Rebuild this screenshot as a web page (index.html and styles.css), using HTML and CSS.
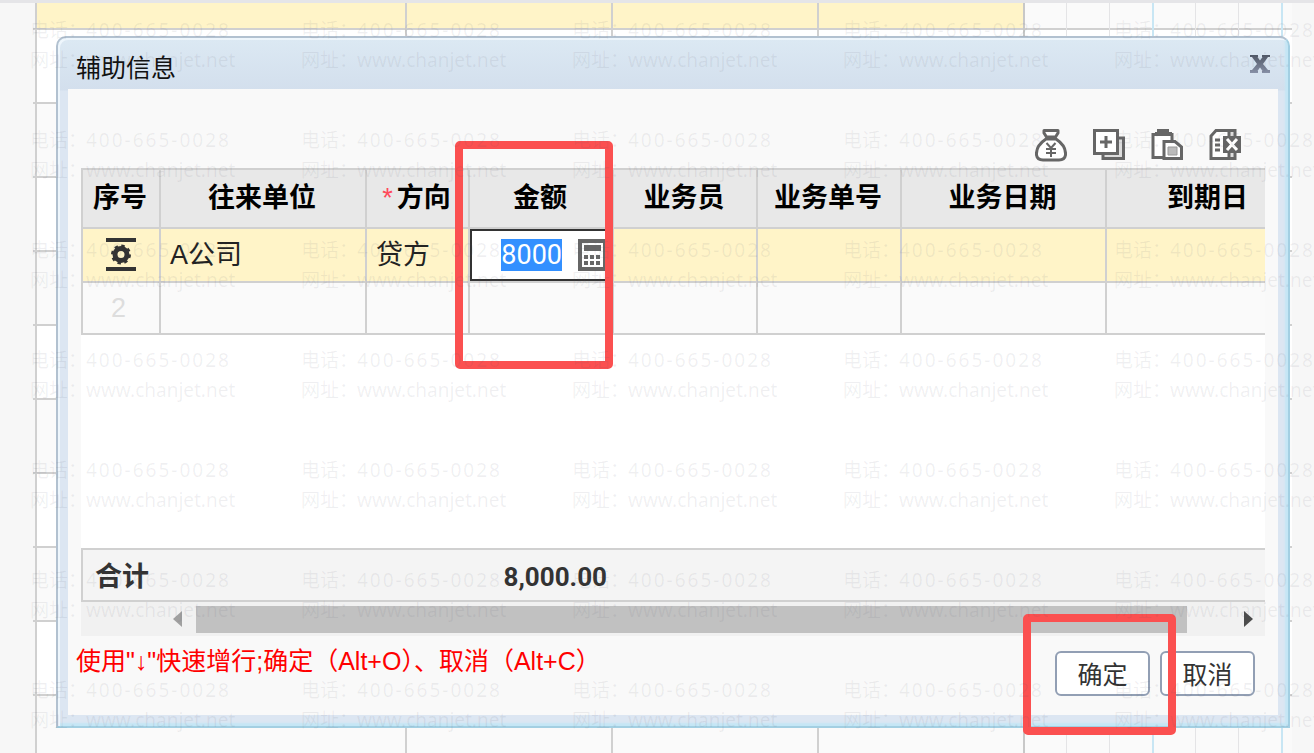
FILE: index.html
```html
<!DOCTYPE html>
<html lang="zh-CN">
<head>
<meta charset="utf-8">
<title>辅助信息</title>
<link rel="stylesheet" href="styles.css">
</head>
<body>
<main class="page">
  <div class="ledger" aria-hidden="true">
    <div class="ledger-rows">
      <div class="ledger-row active"></div>
      <div class="ledger-row"></div><div class="ledger-row"></div>
      <div class="ledger-row"></div><div class="ledger-row"></div>
      <div class="ledger-row"></div><div class="ledger-row"></div>
      <div class="ledger-row"></div><div class="ledger-row"></div>
      <div class="ledger-row"></div><div class="ledger-row"></div>
    </div>
    <div class="ledger-cols">
      <i class="lead"></i><i class="wide"></i><i class="wide"></i><i class="wide"></i>
      <i class="digit edge"></i><i class="digit"></i><i class="digit"></i><i class="digit blue"></i><i class="digit"></i><i class="digit"></i><i class="digit blue"></i>
    </div>
  </div>

  <section class="dialog" role="dialog" aria-labelledby="dialog-title">
    <header class="dialog-head">
      <h1 class="dialog-title" id="dialog-title">辅助信息</h1>
      <button class="icon-btn close" type="button" aria-label="关闭">
        <svg width="20" height="18" viewBox="0 0 20 18"><defs><linearGradient id="xg" x1="0" y1="0" x2="0" y2="1"><stop offset="0" stop-color="#505866"/><stop offset="1" stop-color="#8790a6"/></linearGradient></defs><path fill="url(#xg)" d="M0 0H8V2H7.500L10 5.500L12.500 2H12V0H20V2H18L13 9L18 15H20V18H12V16H12.500L10 12.500L7.500 16H8V18H0V15H2L7 9L2 2H0Z"/></svg>
      </button>
    </header>
    <div class="dialog-body">
      <div class="toolbar">
        <button class="icon-btn" type="button" aria-label="金额">
          <svg width="32" height="34" viewBox="0 0 32 34" fill="none" stroke="#666" stroke-width="3"><path fill="#fff" d="M11 11C5 15 1 21 1.500 27C2 30 4 32 8 32H24C28 32 30 30 30.500 27C31 21 27 15 21 11Z"/><path fill="#fff" stroke-width="3" stroke-linejoin="round" d="M9 2.500H23V5L20.500 9H11.500L9 5Z"/><path stroke-width="2" d="M11.500 15L16 20L20.500 15M11 21H21M11 25H21M16 20V29"/></svg>
        </button>
        <button class="icon-btn" type="button" aria-label="增行">
          <svg width="32" height="34" viewBox="0 0 32 34" fill="none" stroke="#666" stroke-width="3"><path fill="#ddd" d="M10 10H30.500V30.500H10Z"/><path fill="#fff" d="M1.500 2.500H24.500V25.500H1.500Z"/><path d="M13 8V20M7 14H19"/></svg>
        </button>
        <button class="icon-btn" type="button" aria-label="粘贴">
          <svg width="32" height="34" viewBox="0 0 32 34" fill="none" stroke="#666" stroke-width="3"><path fill="#fff" d="M2 6.500H21V29.500H2Z"/><path fill="#666" stroke="none" d="M6 1H18V4H21V8H4V4H6Z"/><path fill="#fff" d="M13 13.500H24L30.500 19V30.500H13Z"/><path fill="#bbb" stroke="#999" stroke-width="1" d="M17 19H26V27H17Z"/></svg>
        </button>
        <button class="icon-btn" type="button" aria-label="删行">
          <svg width="32" height="34" viewBox="0 0 32 34" fill="none" stroke="#666" stroke-width="3"><path fill="#ddd" d="M18 2.500H26V30.500H9"/><path fill="#fff" d="M7 2.500H20V30.500H2V8Z"/><path fill="#666" stroke="none" d="M14 8H32V25H14Z"/><path stroke="#fff" d="M18 11L28 22M28 11L18 22"/><path stroke-width="3" d="M6 12H11M6 17H11M6 22H11"/></svg>
        </button>
      </div>

      <div class="grid-frame">
        <div class="grid-clip">
          <table class="grid">
            <colgroup><col class="c-no"><col class="c-unit"><col class="c-dir"><col class="c-mid"><col class="c-mid"><col class="c-mid"><col class="c-date"><col class="c-due"></colgroup>
            <thead>
              <tr><th>序号</th><th>往来单位</th><th><span class="req">*</span>方向</th><th>金额</th><th>业务员</th><th>业务单号</th><th>业务日期</th><th>到期日</th></tr>
            </thead>
            <tbody>
              <tr class="current">
                <td class="no"><button class="icon-btn" type="button" aria-label="行设置"><svg width="30" height="34" viewBox="0 0 30 34"><path fill="#333" d="M0 0H30V4H0ZM0 29H30V33H0Z"/><circle cx="15" cy="16.500" r="6" fill="none" stroke="#333" stroke-width="5"/><circle cx="15" cy="16.500" r="8.500" fill="none" stroke="#333" stroke-width="3" stroke-dasharray="3.340 3.335"/></svg></button></td>
                <td>A公司</td><td>贷方</td>
                <td class="editing"><div class="editor"><input class="amount" type="text" value="8000" aria-label="金额"><button class="icon-btn" type="button" aria-label="计算器"><svg width="28" height="32" viewBox="0 0 28 32"><path fill="#666" d="M0 0H28V32H0Z"/><path fill="#fff" d="M4 4H25V28H4Z"/><path fill="#666" d="M6 6H23V12H6ZM6 16H10V20H6ZM12 16H16V20H12ZM18 16H22V20H18ZM6 22H10V26H6ZM12 22H16V26H12ZM18 22H22V26H18Z"/></svg></button></div></td>
                <td></td><td></td><td></td><td></td>
              </tr>
              <tr><td class="no pale">2</td><td></td><td></td><td></td><td></td><td></td><td></td><td></td></tr>
            </tbody>
          </table>
        </div>
        <div class="totals"><span class="total-label">合计</span><span class="total-value">8,000.00</span></div>
        <div class="scroll">
          <button class="icon-btn arrow" type="button" aria-label="向左滚动"><svg width="9" height="16" viewBox="0 0 9 16"><path fill="#a0a0a0" d="M9 0V16L0 8Z"/></svg></button>
          <div class="thumb"></div>
          <button class="icon-btn arrow" type="button" aria-label="向右滚动"><svg width="9" height="16" viewBox="0 0 9 16"><path fill="#4c4c4c" d="M0 0V16L9 8Z"/></svg></button>
        </div>
        <div class="mark mark-amount"></div>
      </div>

      <footer class="dialog-foot">
        <p class="hint">使用"↓"快速增行;确定（Alt+O）、取消（Alt+C）</p>
        <div class="actions">
          <button class="btn" type="button">确定</button>
          <button class="btn" type="button">取消</button>
          <div class="mark mark-ok"></div>
        </div>
      </footer>
    </div>
  </section>

  <div class="watermarks" id="watermarks" aria-hidden="true"></div>
</main>
<script src="main.js"></script>
</body>
</html>
```

FILE: styles.css
```css
* { box-sizing: border-box; }

body {
  margin: 0;
  background: #f7f7f7;
  color: #222;
  font-family: "Liberation Sans", "Noto Sans CJK SC", sans-serif;
}

.page {
  display: grid;
  grid-template: minmax(0, 1fr) / minmax(0, 1fr);
  height: 100vh;
  min-height: 640px;
  border-top: 3px solid #e5e5e8;
  overflow: hidden;
}
.page > * { grid-area: 1 / 1; }

/* ledger behind the dialog */
.ledger {
  display: grid;
  margin: 0 22px 0 33px;
  overflow: hidden;
}
.ledger-rows, .ledger-cols { grid-area: 1 / 1; }
.ledger-row {
  height: 74px;
  background: linear-gradient(90deg, #f7f7f7 2px, #fff 2px);
  border-bottom: 2px solid #d0d0d0;
}
.ledger-row:nth-child(odd) { background: linear-gradient(90deg, #f7f7f7 2px, #fafafa 2px); }
.ledger-row.active {
  height: 27px;
  background: linear-gradient(90deg, #f7f7f7 2px, #fff4c8 2px, #fff4c8 990px, #fafafa 990px);
}
.ledger-cols { display: flex; padding-left: 2px; }
.ledger-cols i { flex: none; border-left: 2px solid #d0d0d0; }
.lead { width: 370px; }
.wide { width: 206px; }
.ledger-cols .digit { width: 43px; border-left: 1px solid #e4e4e6; }
.ledger-cols .edge { border-left: 2px solid #c8c8c8; }
.ledger-cols .blue { border-left: 2px solid #c8e6f4; }

/* dialog */
.dialog {
  display: flex;
  flex-direction: column;
  margin: 33px 24px 25px 56px;
  padding: 0 10px 11px;
  border: 2px solid #b2c1d0;
  border-right-color: #a3cfe2;
  border-bottom-color: #a3cfe2;
  border-radius: 10px 10px 0 0;
  background: linear-gradient(#dce9f3, #d3dfed 52px, #dce6f2 53px);
  box-shadow: inset 2px 2px 0 #eef6fc, inset -3px -3px 2px #c4e6f5;
  z-index: 1;
}
.dialog-head {
  display: flex;
  align-items: center;
  justify-content: space-between;
  height: 51px;
  padding: 0 8px;
}
.dialog-title {
  margin: 8px 0 0;
  color: #111;
  font-size: 25px;
  line-height: 32px;
  font-weight: 400;
}
.icon-btn {
  display: block;
  padding: 0;
  border: 0;
  background: none;
}
.icon-btn svg { display: block; }
.dialog-body {
  flex: 1;
  display: flex;
  flex-direction: column;
  min-height: 0;
  padding: 39px 13px 19px;
  background: #f9f9f9;
}
.toolbar {
  display: flex;
  align-items: flex-start;
  justify-content: flex-end;
  gap: 26px;
  height: 40px;
  padding-right: 24px;
}

/* data grid */
.grid-frame {
  flex: 1;
  display: flex;
  flex-direction: column;
  position: relative;
  min-height: 0;
}
.grid-clip { flex: 1; overflow: hidden; background: #fff; }
.grid {
  width: 1229px;
  table-layout: fixed;
  border-collapse: separate;
  border-spacing: 0;
  font-size: 27px;
  line-height: 36px;
  white-space: nowrap;
}
.c-no { width: 78px; }
.c-unit { width: 206px; }
.c-dir { width: 103px; }
.c-mid { width: 144px; }
.c-date { width: 205px; }
.c-due { width: 205px; }
.grid th, .grid td {
  border-top: 2px solid #d0d0d0;
  border-left: 2px solid #d0d0d0;
}
.grid th {
  height: 59px;
  padding: 0 2px 2px 0;
  background: #e8e8e8;
  color: #000;
  font-weight: 700;
}
.grid td {
  height: 54px;
  padding: 0 9px;
  background: #fafafa;
}
.grid .current td { background: #fff4c8; }
.grid tbody tr:last-child td { border-bottom: 2px solid #d0d0d0; }
.req {
  margin-right: 4px;
  color: #ff4a5a;
  font-weight: 400;
}
.grid .no { text-align: center; }
.no .icon-btn { margin: 0 auto; }
.grid .pale { color: #ddd; padding-right: 14px; }
.grid .editing { padding: 0; }
.editor {
  display: flex;
  align-items: center;
  gap: 16px;
  height: 52px;
  padding-right: 4px;
  border: 2px solid #333;
  background: #fff;
}
.amount {
  flex: 1;
  min-width: 0;
  padding: 0;
  border: 0;
  outline: 0;
  background: none;
  font: 27px/32px Roboto, sans-serif;
  text-align: right;
}
.amount::selection { background: #3390ff; color: #fff; }

.totals {
  display: flex;
  align-items: center;
  height: 54px;
  padding: 3px 0 0 12px;
  border: 2px solid #d0d0d0;
  border-right: 0;
  background: #f4f4f4;
  color: #333;
  font: 700 27px/36px Roboto, "Noto Sans CJK SC", sans-serif;
}
.total-label { width: 280px; }
.total-value { width: 232px; font-size: 26px; text-align: right; }
.scroll {
  display: flex;
  align-items: center;
  gap: 14px;
  height: 34px;
  padding: 0 12px 0 92px;
  background: #f1f1f1;
}
.thumb { flex: 1; height: 27px; margin-right: 43px; background: #c1c1c1; }

/* footer */
.dialog-foot {
  display: flex;
  justify-content: space-between;
  padding: 15px 10px 0 0;
}
.hint {
  margin: -6px 0 0 -5px;
  color: #f00;
  font-size: 25px;
  line-height: 32px;
  white-space: nowrap;
}
.actions { display: flex; gap: 10px; position: relative; }
.btn {
  width: 95px;
  height: 45px;
  padding: 2px 0 0;
  border: 2px solid #929fb4;
  border-radius: 6px;
  background: #fff;
  color: #333;
  font: 25px/32px "Liberation Sans", "Noto Sans CJK SC", sans-serif;
}

/* highlight frames drawn over the content */
.mark {
  position: absolute;
  border: 8px solid #fb5050;
  border-radius: 5px;
  pointer-events: none;
}
.mark-amount { left: 374px; top: -27px; width: 158px; height: 228px; }
.mark-ok { left: -32px; top: -37px; width: 153px; height: 121px; }

/* watermark */
.watermarks {
  display: grid;
  grid-template-columns: repeat(auto-fill, 271px);
  grid-auto-rows: 110px;
  width: 1626px;
  padding: 12px 0 0 30px;
  overflow: hidden;
  color: rgba(90, 90, 110, 0.09);
  font: 19px/30px "Noto Sans", "Noto Sans CJK SC", sans-serif;
  white-space: nowrap;
  pointer-events: none;
  z-index: 2;
}
.watermark { display: grid; grid-template-columns: 56px 1fr; align-content: start; }
.phone { letter-spacing: 2px; }
```

FILE: main.js
```js
const holder = document.getElementById("watermarks");
for (let i = 0; i < 35; i++) {
  const mark = document.createElement("div");
  mark.className = "watermark";
  mark.innerHTML =
    '<span>电话：</span><span class="phone">400-665-0028</span>' +
    "<span>网址：</span><span>www.chanjet.net</span>";
  holder.append(mark);
}

const amount = document.querySelector(".amount");
amount.focus();
amount.select();
```
